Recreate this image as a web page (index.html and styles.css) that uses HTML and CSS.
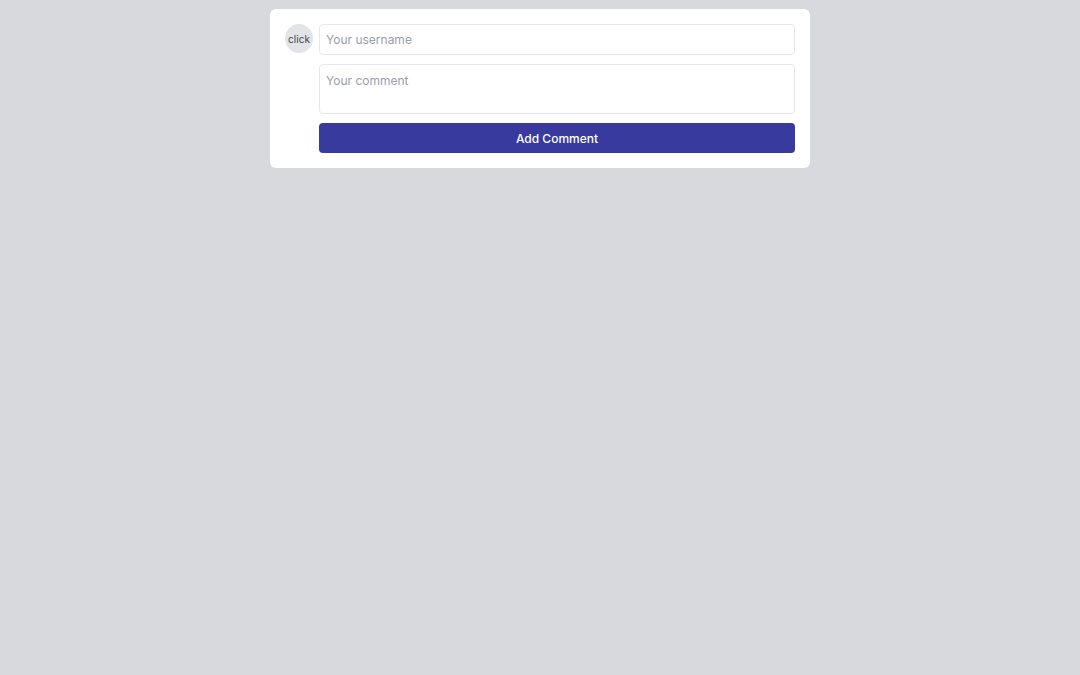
FILE: index.html
```html
<!DOCTYPE html>
<html>
<head>
<meta charset="utf-8">
<link rel="stylesheet" href="styles.css">
</head>
<body>
<div class="card">
  <div class="row">
    <div class="avatar">click</div>
    <div class="fields">
      <input class="input" type="text" placeholder="Your username">
      <textarea class="textarea" placeholder="Your comment"></textarea>
      <button class="btn">Add Comment</button>
    </div>
  </div>
</div>
</body>
</html>
```

FILE: styles.css
```css
html, body {
  margin: 0;
  padding: 0;
  background: #d8d9dd;
  font-family: Inter, "Noto Sans", sans-serif;
}
body {
  padding-top: 9px;
}
.card {
  width: 540px;
  box-sizing: border-box;
  margin: 0 auto;
  background: #ffffff;
  border-radius: 6px;
  padding: 15px;
}
.row {
  display: flex;
  gap: 6px;
  align-items: flex-start;
}
.avatar {
  width: 28px;
  height: 29px;
  border-radius: 50%;
  background: #e3e4e7;
  color: #3f4450;
  font-size: 10px;
  display: flex;
  align-items: center;
  justify-content: center;
  flex-shrink: 0;
}
.fields {
  flex: 1;
  display: flex;
  flex-direction: column;
  gap: 9px;
}
.input, .textarea {
  box-sizing: border-box;
  width: 100%;
  border: 1px solid #e6e7ea;
  border-radius: 4px;
  font-family: Inter, "Noto Sans", sans-serif;
  font-size: 12px;
  color: #333;
  padding: 0 6px;
  margin: 0;
  outline: none;
  background: #fff;
}
.input {
  height: 31px;
}
.textarea {
  height: 50px;
  padding-top: 8px;
  resize: none;
  display: block;
}
.input::placeholder, .textarea::placeholder {
  color: #9a9ea6;
}
.btn {
  height: 30px;
  border: none;
  border-radius: 4px;
  background: #383a9d;
  color: #ffffff;
  font-family: Inter, "Noto Sans", sans-serif;
  font-size: 12px;
  font-weight: 500;
  margin: 0;
  padding: 0;
}
```
